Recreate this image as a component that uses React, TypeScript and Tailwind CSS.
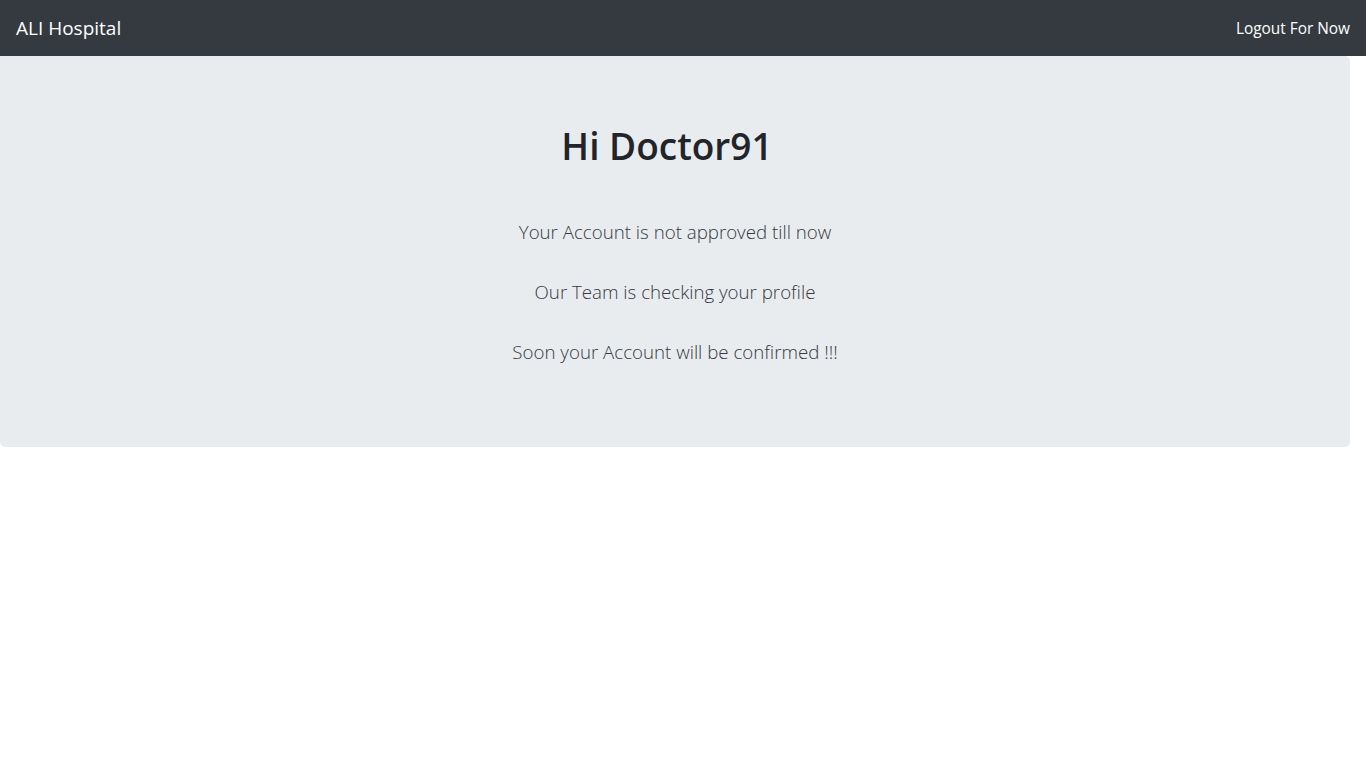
export default function App() {
  return (
    <div className="min-h-screen bg-white font-['Open_Sans','Noto_Sans',sans-serif] text-[#212529]">
      {/* navbar */}
      <nav className="h-14 bg-[#343a40] flex items-center justify-between px-4">
        <span className="text-white text-[19px] leading-[30px]">ALI Hospital</span>
        <span className="mt-[2px] text-white text-[15.4px]">Logout For Now</span>
      </nav>

      {/* jumbotron */}
      <div className="mr-4 bg-[#e9ecef] rounded-b-[5px] rounded-tr-[5px] px-8 py-16 flex flex-col items-center text-center">
        <h1 className="mt-[2px] mr-4 text-[37px] leading-[48px] font-semibold">Hi Doctor91</h1>
        <p className="mt-[47px] text-[18.7px] leading-[30px] font-light text-[#343a40]">
          Your Account is not approved till now
        </p>
        <p className="mt-[30px] text-[18.7px] leading-[30px] font-light text-[#343a40]">
          Our Team is checking your profile
        </p>
        <p className="mt-[30px] mb-4 text-[18.7px] leading-[30px] font-light text-[#343a40]">
          Soon your Account will be confirmed !!!
        </p>
      </div>
    </div>
  );
}
